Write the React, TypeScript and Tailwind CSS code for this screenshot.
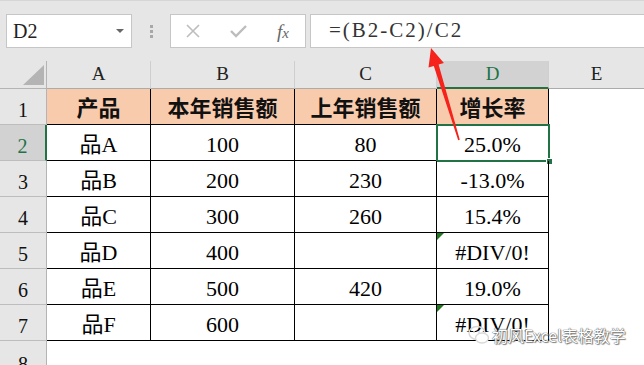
import React from 'react';

const serif = "font-['Liberation_Serif','Noto_Sans_CJK_SC',serif]";

const rows = [
  { n: 1, cells: ['产品', '本年销售额', '上年销售额', '增长率'], head: true },
  { n: 2, cells: ['品A', '100', '80', '25.0%'] },
  { n: 3, cells: ['品B', '200', '230', '-13.0%'] },
  { n: 4, cells: ['品C', '300', '260', '15.4%'] },
  { n: 5, cells: ['品D', '400', '', '#DIV/0!'], err: true },
  { n: 6, cells: ['品E', '500', '420', '19.0%'] },
  { n: 7, cells: ['品F', '600', '', '#DIV/0!'], err: true },
];

function ErrMark() {
  return (
    <svg className="absolute left-0 top-0" width="7" height="7" viewBox="0 0 7 7">
      <polygon points="0,0 7,0 0,7" fill="#1f7a1f" />
    </svg>
  );
}

export default function App() {
  return (
    <div className="relative w-[644px] h-[365px] overflow-hidden bg-white">
      {/* formula bar */}
      <div className="h-[61px] bg-[#e6e6e6] border-t border-[#d6d6d6] flex items-start pt-[13px] pl-[6px]">
        <div className="w-[126px] h-[34px] bg-white border border-[#c6c6c6] flex items-center justify-between pl-[6px] pr-[7px]">
          <span className={`${serif} text-[20px] text-[#222]`}>D2</span>
          <svg width="8" height="4" viewBox="0 0 8 4">
            <polygon points="0,0 8,0 4,4" fill="#666" />
          </svg>
        </div>
        <div className="w-[38px] h-[34px] flex flex-col items-center justify-center gap-[2px]">
          <div className="w-[3px] h-[3px] bg-[#a8a8a8]" />
          <div className="w-[3px] h-[3px] bg-[#a8a8a8]" />
          <div className="w-[3px] h-[3px] bg-[#a8a8a8]" />
        </div>
        <div className="w-[136px] h-[34px] bg-white border border-[#c6c6c6] flex items-center pl-[15px] gap-[30px]">
          <svg width="14" height="14" viewBox="0 0 14 14">
            <path d="M1 1 L13 13 M13 1 L1 13" stroke="#bdbdbd" strokeWidth="1.6" fill="none" />
          </svg>
          <svg width="17" height="14" viewBox="0 0 17 14">
            <path d="M1 7 L6 12 L16 2" stroke="#bdbdbd" strokeWidth="2.4" fill="none" />
          </svg>
          <span className="font-['Liberation_Serif',serif] italic text-[19px] text-[#666] leading-none">
            f<span className="text-[15px]">x</span>
          </span>
        </div>
        <div className="ml-[4px] flex-1 h-[34px] bg-white border border-r-0 border-[#c6c6c6] flex items-center pl-[18px]">
          <span className={`${serif} text-[21px] tracking-[2px] text-[#333]`}>=(B2-C2)/C2</span>
        </div>
      </div>

      {/* sheet */}
      <div className={`grid grid-cols-[47px_104px_144px_142px_112px_1fr] ${serif}`}>
        {/* column headers */}
        <div className="h-[28px] bg-[#e6e6e6] border-r border-b border-[#b4b4b4] relative">
          <svg className="absolute left-[23px] top-[4px]" width="21" height="20" viewBox="0 0 21 20">
            <polygon points="21,0 21,20 0,20" fill="#b4b4b4" />
          </svg>
        </div>
        {['A', 'B', 'C'].map((c) => (
          <div
            key={c}
            className="h-[28px] bg-[#e6e6e6] border-r border-r-[#cfcfcf] border-b border-b-[#ababab] flex items-center justify-center text-[19px] text-[#222]"
          >
            {c}
          </div>
        ))}
        <div className="h-[28px] bg-[#d2d2d2] border-r border-r-[#cfcfcf] border-b-2 border-b-[#217346] flex items-center justify-center text-[19px] text-[#217346]">
          D
        </div>
        <div className="h-[28px] bg-[#e6e6e6] border-b border-b-[#ababab] flex items-center justify-center text-[19px] text-[#222]">
          E
        </div>

        {rows.map((r) => (
          <React.Fragment key={r.n}>
            <div
              className={
                r.n === 2
                  ? 'h-[36px] bg-[#d2d2d2] border-r-2 border-r-[#217346] border-b border-b-[#bdbdbd] flex items-center justify-center text-[20px] text-[#217346] pt-[6px]'
                  : 'h-[36px] bg-[#e6e6e6] border-r border-r-[#b4b4b4] border-b border-b-[#bdbdbd] flex items-center justify-center text-[20px] text-[#111] pt-[6px]'
              }
            >
              {r.n}
            </div>
            {r.cells.map((v, i) => (
              <div
                key={i}
                className={
                  r.head
                    ? "relative h-[36px] bg-[#f8cbad] border-r border-b border-black flex items-center justify-center font-['Noto_Sans_CJK_SC',sans-serif] font-bold text-[22px] text-[#111]"
                    : 'relative h-[36px] border-r border-b border-black flex items-center justify-center text-[22px] text-black pt-[3px]'
                }
              >
                {r.err && i === 3 && <ErrMark />}
                {v}
                {r.n === 2 && i === 3 && (
                  <div className="absolute left-[-1px] top-[-1px] right-[-2px] bottom-[-2px] border-2 border-[#217346]">
                    <div className="absolute right-[-5px] bottom-[-5px] w-[7px] h-[7px] bg-[#217346] border border-white" />
                  </div>
                )}
              </div>
            ))}
            <div className="h-[36px]" />
          </React.Fragment>
        ))}

        <div className="h-[36px] bg-[#e6e6e6] border-r border-r-[#b4b4b4] flex items-center justify-center text-[20px] text-[#111] pt-[10px]">
          8
        </div>
        <div className="h-[36px] col-span-5" />
      </div>

      {/* red arrow */}
      <svg className="absolute left-0 top-0 pointer-events-none" width="644" height="365">
        <polygon
          points="431,48 443.9,62.9 438.6,64.5 459.8,139.8 458.2,140.2 433.8,65.9 428.5,67.5"
          fill="#f5231c"
        />
      </svg>

      {/* watermark */}
      <div className="absolute left-[468px] top-[323px] flex items-center gap-[2px] pointer-events-none">
        <svg width="22" height="20" viewBox="0 0 22 20">
          <ellipse cx="9" cy="8" rx="8" ry="6.5" fill="none" stroke="#d8d8d8" strokeWidth="1.4" />
          <ellipse cx="14" cy="13" rx="6.5" ry="5" fill="white" stroke="#d8d8d8" strokeWidth="1.4" />
          <circle cx="6" cy="7" r="1" fill="#d8d8d8" />
          <circle cx="11" cy="7" r="1" fill="#d8d8d8" />
        </svg>
        <span className="font-['Noto_Sans_CJK_SC',sans-serif] text-[16px] text-white [text-shadow:0_0_1px_#555,0_0_1px_#555,1px_1px_1px_#888]">
          初风Excel表格教学
        </span>
      </div>
    </div>
  );
}
